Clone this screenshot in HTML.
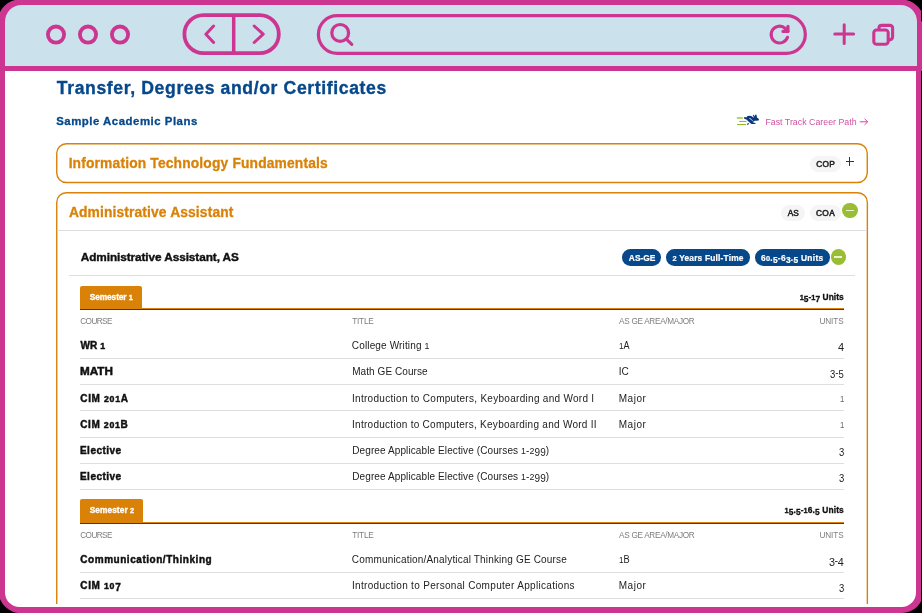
<!DOCTYPE html>
<html><head><meta charset="utf-8"><title>Transfer, Degrees and/or Certificates</title>
<style>
html,body{margin:0;padding:0;}
body{width:922px;height:613px;overflow:hidden;background:#000;position:relative;font-family:"Liberation Sans",sans-serif;}
#bar{position:absolute;left:5px;top:5px;width:911.6px;height:61px;background:#cbe1ec;border-radius:16.5px 16.5px 0 0;}
#page{position:absolute;left:5px;top:71px;width:910.6px;height:536.2px;background:#fff;border-radius:0 0 14.5px 14.5px;overflow:hidden;}
#inner{position:absolute;left:-5px;top:-71px;width:922px;height:604.3px;overflow:hidden;will-change:transform;}
#inner div{position:absolute;box-sizing:border-box;}
#inner span{position:absolute;white-space:pre;line-height:1;transform-origin:0 50%;}
#inner i{font-style:normal;} #inner i.s{font-size:0.88em;} #inner i.d{position:relative;top:0.19em;}
.ov{position:absolute;left:0;top:0;}
</style></head>
<body>
<svg class="ov" width="922" height="613" viewBox="0 0 922 613"><path fill="#cc3691" d="M19.5 -0.4 H901.6 A22.5 22.5 0 0 1 924.1 22.1 L923.4 591.5 A21.5 21.5 0 0 1 901.9 613 L20.9 613.2 A22.5 22.5 0 0 1 -1.6 590.7 L-2 21.1 A21.5 21.5 0 0 1 19.5 -0.4 Z"/><rect x="921" y="12" width="1" height="9.3" fill="#000"/><rect x="921" y="71" width="1" height="542" fill="#000"/></svg>
<div id="bar"></div>
<div id="page"><div id="inner">
<svg class="ov" width="922" height="605" viewBox="0 0 922 605" fill="none" stroke="#d98207" stroke-width="1.4">
<rect x="56.75" y="143.75" width="810.5" height="38.7" rx="9.6"/>
<rect x="56.75" y="192.8" width="810.6" height="460" rx="9.6"/>
</svg>
<div style="left:810px;top:155.8px;width:31.2px;height:16.6px;background:#f5f5f5;border-radius:9px;"></div>
<div style="left:780.7px;top:204.5px;width:24.1px;height:16.9px;background:#f5f5f5;border-radius:9px;"></div>
<div style="left:810px;top:204.5px;width:31px;height:16.9px;background:#f5f5f5;border-radius:9px;"></div>
<div style="left:846px;top:160.85px;width:8.2px;height:1.15px;background:#333;"></div>
<div style="left:849.35px;top:157.2px;width:1.15px;height:8.6px;background:#333;"></div>
<div style="left:842.4px;top:203.0px;width:15.2px;height:15.2px;background:#99be35;border-radius:50%;"></div>
<div style="left:846.0px;top:209.6px;width:8.1px;height:1.8px;background:#ebf2d3;"></div>
<div style="left:830.8px;top:249.4px;width:15.2px;height:15.2px;background:#99be35;border-radius:50%;"></div>
<div style="left:834.2px;top:256.15px;width:8.1px;height:1.8px;background:#ebf2d3;"></div>
<div style="left:57.3px;top:230px;width:809.5px;height:1px;background:#dedede;"></div>
<div style="left:69px;top:275px;width:786px;height:1px;background:#dedede;"></div>
<div style="left:621.5px;top:249.3px;width:39.9px;height:17px;background:#06488a;border-radius:9px;"></div>
<div style="left:665.9px;top:249.3px;width:84.2px;height:17px;background:#06488a;border-radius:9px;"></div>
<div style="left:754.6px;top:249.3px;width:75.1px;height:17px;background:#06488a;border-radius:9px;"></div>
<div style="left:80.4px;top:286px;width:61.5px;height:23px;background:#d98207;border-radius:2px 2px 0 0;"></div>
<div style="left:80.4px;top:308px;width:763.4px;height:1px;background:#d98207;"></div>
<div style="left:80.4px;top:309px;width:763.4px;height:1px;background:#06488a;"></div>
<div style="left:80.4px;top:357.6px;width:763.4px;height:1px;background:#dedede;"></div>
<div style="left:80.4px;top:384.0px;width:763.4px;height:1px;background:#dedede;"></div>
<div style="left:80.4px;top:410.0px;width:763.4px;height:1px;background:#dedede;"></div>
<div style="left:80.4px;top:436.6px;width:763.4px;height:1px;background:#dedede;"></div>
<div style="left:80.4px;top:462.6px;width:763.4px;height:1px;background:#dedede;"></div>
<div style="left:80.4px;top:488.9px;width:763.4px;height:1px;background:#dedede;"></div>
<div style="left:80.4px;top:499.1px;width:62.9px;height:24px;background:#d98207;border-radius:2px 2px 0 0;"></div>
<div style="left:80.4px;top:522px;width:763.4px;height:1px;background:#d98207;"></div>
<div style="left:80.4px;top:523px;width:763.4px;height:1px;background:#06488a;"></div>
<div style="left:80.4px;top:572.0px;width:763.4px;height:1px;background:#dedede;"></div>
<div style="left:80.4px;top:598.0px;width:763.4px;height:1px;background:#dedede;"></div>
<svg class="ov" style="left:732px;top:110px" width="36" height="20" viewBox="732 110 36 20">
<rect x="736.9" y="117" width="6" height="1.9" fill="#b4d466"/>
<rect x="739.2" y="120.9" width="7.3" height="1.1" fill="#96bb33"/>
<rect x="737" y="124" width="9.1" height="1.1" fill="#96bb33"/>
<path fill="#0a3880" d="M743.9 117.4 L745 116.9 L746.3 117.4 L747.2 116.2 L749 115.8 L751.2 116 L752.8 117 L753.9 117.9 L753.4 116.4 L752.8 115 L753.7 114.8 L754.9 116.5 L755.2 114.7 L756.3 114.6 L756.9 116.5 L756.8 117.5 L758.2 118.3 L759 119.5 L758.6 120.4 L756 120.7 L754.6 120.7 L753.4 121.6 L753.2 122.4 L755.4 123 L755.7 123.8 L754.5 124.1 L751.6 124 L750.4 123.3 L748 120.9 L746.4 119.4 L744.3 118.8 Z"/>
<path fill="#0a3880" d="M747 124.7 L747.3 123.6 L748.6 123 L748.9 123.7 L748.2 124.7 Z"/>
<path d="M749.3 118.5 L750.6 118.7 L751.5 120 L752.8 120.9" stroke="#fff" stroke-width="0.75" fill="none"/>
</svg>
<svg class="ov" style="left:858px;top:116px" width="12" height="12" viewBox="858 116 12 12" fill="none" stroke="#c8388f" stroke-width="0.9">
<path d="M859.8 121.8 H867.6 M864.6 118.8 L867.7 121.8 L864.6 124.8"/>
</svg>
<span style="top:79.50px;font-size:17.6px;color:#06488a;font-weight:700;-webkit-text-stroke:0.35px #06488a;left:56.80px;letter-spacing:0.624px;">Transfer, Degrees and/or Certificates</span>
<span style="top:115.60px;font-size:11.4px;color:#06488a;font-weight:700;-webkit-text-stroke:0.3px #06488a;left:56.22px;letter-spacing:0.520px;">Sample Academic Plans</span>
<span style="top:117.90px;font-size:8.8px;color:#d0509f;left:765.41px;letter-spacing:0.012px;">Fast Track Career Path</span>
<span style="top:156.90px;font-size:13.8px;color:#d98207;font-weight:700;-webkit-text-stroke:0.3px #d98207;left:68.64px;letter-spacing:0.166px;">Information Technology Fundamentals</span>
<span style="top:160.15px;font-size:8.3px;color:#222;-webkit-text-stroke:0.5px #222;left:816.31px;letter-spacing:0.277px;">COP</span>
<span style="top:205.90px;font-size:13.8px;color:#d98207;font-weight:700;-webkit-text-stroke:0.3px #d98207;left:68.88px;letter-spacing:0.140px;">Administrative Assistant</span>
<span style="top:209.15px;font-size:8.3px;color:#222;-webkit-text-stroke:0.5px #222;left:787.70px;letter-spacing:-0.030px;">AS</span>
<span style="top:209.15px;font-size:8.3px;color:#222;-webkit-text-stroke:0.5px #222;left:815.91px;letter-spacing:0.432px;">COA</span>
<span style="top:252.40px;font-size:11.8px;color:#111;font-weight:700;-webkit-text-stroke:0.4px #111;left:80.72px;letter-spacing:-0.082px;">Administrative Assistant, AS</span>
<span style="top:254.10px;font-size:8.4px;color:#fff;font-weight:700;-webkit-text-stroke:0.2px #fff;left:628.87px;letter-spacing:0.005px;">AS-GE</span>
<span style="top:254.10px;font-size:8.4px;color:#fff;font-weight:700;-webkit-text-stroke:0.2px #fff;left:672.47px;letter-spacing:0.187px;"><i class="s">2</i> Years Full-Time</span>
<span style="top:254.10px;font-size:8.4px;color:#fff;font-weight:700;-webkit-text-stroke:0.2px #fff;left:760.94px;letter-spacing:0.288px;">6<i class="s">0</i>.<i class="d">5</i>-6<i class="d">3</i>.<i class="d">5</i> Units</span>
<span style="top:293.10px;font-size:8.4px;color:#fff;font-weight:700;-webkit-text-stroke:0.3px #fff;left:89.67px;letter-spacing:-0.105px;">Semester <i class="s">1</i></span>
<span style="top:293.10px;font-size:8.4px;color:#111;font-weight:700;-webkit-text-stroke:0.3px #111;left:799.64px;letter-spacing:0.048px;"><i class="s">1</i><i class="d">5</i>-<i class="s">1</i><i class="d">7</i> Units</span>
<span style="top:317.70px;font-size:8.2px;color:#7d7d7d;left:80.22px;letter-spacing:-0.561px;">COURSE</span>
<span style="top:317.70px;font-size:8.2px;color:#7d7d7d;left:352.17px;letter-spacing:-0.156px;">TITLE</span>
<span style="top:317.70px;font-size:8.2px;color:#7d7d7d;left:619.10px;letter-spacing:-0.293px;">AS GE AREA/MAJOR</span>
<span style="top:317.70px;font-size:8.2px;color:#7d7d7d;left:819.39px;letter-spacing:-0.051px;">UNITS</span>
<span style="top:340.80px;font-size:10.0px;color:#111;font-weight:700;-webkit-text-stroke:0.45px #111;left:80.60px;letter-spacing:0.087px;">WR <i class="s">1</i></span>
<span style="top:340.80px;font-size:10.0px;color:#222;left:351.83px;letter-spacing:0.145px;">College Writing <i class="s">1</i></span>
<span style="top:340.80px;font-size:10.0px;color:#222;left:619.00px;transform:scaleX(0.9028);"><i class="s">1</i>A</span>
<span style="top:339.90px;font-size:10.8px;color:#222;left:837.63px;transform:scaleX(1.0219);"><i class="d">4</i></span>
<span style="top:366.80px;font-size:10.0px;color:#111;font-weight:700;-webkit-text-stroke:0.45px #111;left:79.87px;transform:scaleX(1.1692);">MATH</span>
<span style="top:366.80px;font-size:10.0px;color:#222;left:352.22px;letter-spacing:0.069px;">Math GE Course</span>
<span style="top:366.80px;font-size:10.0px;color:#222;left:618.72px;letter-spacing:0.028px;">IC</span>
<span style="top:366.90px;font-size:10.8px;color:#222;left:830.10px;transform:scaleX(0.8812);"><i class="d">3</i>-<i class="d">5</i></span>
<span style="top:393.80px;font-size:10.0px;color:#111;font-weight:700;-webkit-text-stroke:0.45px #111;left:80.29px;letter-spacing:0.663px;">CIM <i class="s">2</i><i class="s">0</i><i class="s">1</i>A</span>
<span style="top:393.80px;font-size:10.0px;color:#222;left:352.02px;letter-spacing:0.288px;">Introduction to Computers, Keyboarding and Word I</span>
<span style="top:393.80px;font-size:10.0px;color:#222;left:618.72px;letter-spacing:0.529px;">Major</span>
<span style="top:392.90px;font-size:10.8px;color:#666;left:839.52px;transform:scaleX(0.8106);"><i class="s">1</i></span>
<span style="top:419.80px;font-size:10.0px;color:#111;font-weight:700;-webkit-text-stroke:0.45px #111;left:80.29px;letter-spacing:0.614px;">CIM <i class="s">2</i><i class="s">0</i><i class="s">1</i>B</span>
<span style="top:419.80px;font-size:10.0px;color:#222;left:352.02px;letter-spacing:0.276px;">Introduction to Computers, Keyboarding and Word II</span>
<span style="top:419.80px;font-size:10.0px;color:#222;left:618.72px;letter-spacing:0.529px;">Major</span>
<span style="top:418.90px;font-size:10.8px;color:#666;left:839.52px;transform:scaleX(0.8106);"><i class="s">1</i></span>
<span style="top:445.80px;font-size:10.0px;color:#111;font-weight:700;-webkit-text-stroke:0.45px #111;left:79.97px;letter-spacing:0.480px;">Elective</span>
<span style="top:445.80px;font-size:10.0px;color:#222;left:352.22px;letter-spacing:0.104px;">Degree Applicable Elective (Courses <i class="s">1</i>-<i class="s">2</i><i class="d">9</i><i class="d">9</i>)</span>
<span style="top:444.90px;font-size:10.8px;color:#222;left:838.60px;transform:scaleX(0.8778);"><i class="d">3</i></span>
<span style="top:471.80px;font-size:10.0px;color:#111;font-weight:700;-webkit-text-stroke:0.45px #111;left:79.97px;letter-spacing:0.480px;">Elective</span>
<span style="top:471.80px;font-size:10.0px;color:#222;left:352.22px;letter-spacing:0.104px;">Degree Applicable Elective (Courses <i class="s">1</i>-<i class="s">2</i><i class="d">9</i><i class="d">9</i>)</span>
<span style="top:470.90px;font-size:10.8px;color:#222;left:838.60px;transform:scaleX(0.8778);"><i class="d">3</i></span>
<span style="top:506.10px;font-size:8.4px;color:#fff;font-weight:700;-webkit-text-stroke:0.3px #fff;left:89.67px;letter-spacing:0.040px;">Semester <i class="s">2</i></span>
<span style="top:506.10px;font-size:8.4px;color:#111;font-weight:700;-webkit-text-stroke:0.3px #111;left:784.44px;letter-spacing:0.120px;"><i class="s">1</i><i class="d">5</i>.<i class="d">5</i>-<i class="s">1</i>6.<i class="d">5</i> Units</span>
<span style="top:531.70px;font-size:8.2px;color:#7d7d7d;left:80.22px;letter-spacing:-0.561px;">COURSE</span>
<span style="top:531.70px;font-size:8.2px;color:#7d7d7d;left:352.17px;letter-spacing:-0.156px;">TITLE</span>
<span style="top:531.70px;font-size:8.2px;color:#7d7d7d;left:619.10px;letter-spacing:-0.293px;">AS GE AREA/MAJOR</span>
<span style="top:531.70px;font-size:8.2px;color:#7d7d7d;left:819.39px;letter-spacing:-0.051px;">UNITS</span>
<span style="top:554.80px;font-size:10.0px;color:#111;font-weight:700;-webkit-text-stroke:0.45px #111;left:80.29px;letter-spacing:0.541px;">Communication/Thinking</span>
<span style="top:554.80px;font-size:10.0px;color:#222;left:351.83px;letter-spacing:0.173px;">Communication/Analytical Thinking GE Course</span>
<span style="top:554.80px;font-size:10.0px;color:#222;left:618.99px;transform:scaleX(0.9238);"><i class="s">1</i>B</span>
<span style="top:554.90px;font-size:10.8px;color:#222;left:829.06px;letter-spacing:-0.467px;"><i class="d">3</i>-<i class="d">4</i></span>
<span style="top:580.80px;font-size:10.0px;color:#111;font-weight:700;-webkit-text-stroke:0.45px #111;left:80.29px;letter-spacing:0.656px;">CIM <i class="s">1</i><i class="s">0</i><i class="d">7</i></span>
<span style="top:580.80px;font-size:10.0px;color:#222;left:352.02px;letter-spacing:0.312px;">Introduction to Personal Computer Applications</span>
<span style="top:580.80px;font-size:10.0px;color:#222;left:618.72px;letter-spacing:0.529px;">Major</span>
<span style="top:580.90px;font-size:10.8px;color:#222;left:838.60px;transform:scaleX(0.8778);"><i class="d">3</i></span>
</div></div>
<svg class="ov" width="922" height="613" viewBox="0 0 922 613" fill="none" stroke="#cc3691" stroke-linecap="round" stroke-linejoin="round">
<g stroke-width="3.8">
<circle cx="56" cy="34.6" r="8.1"/><circle cx="88" cy="34.6" r="8.1"/><circle cx="120" cy="34.6" r="8.1"/>
<rect x="184.4" y="15.1" width="94.4" height="38.1" rx="19.05"/>
</g>
<path d="M233.7 15.5V53" stroke-width="3.5" stroke-linecap="butt"/>
<path d="M213.6 26 L205.9 34.2 L213.6 42.5 M254.2 26 L263.2 34.2 L254.2 42.5" stroke-width="3"/>
<rect x="318.4" y="15.65" width="486.9" height="37.7" rx="18.85" stroke-width="3.2"/>
<circle cx="340.2" cy="32.9" r="8.4" stroke-width="3.2"/>
<path d="M346.6 39.4 L351.8 44.4" stroke-width="3.2"/>
<path d="M787.5 37.3 A8.4 8.4 0 1 1 785.3 28.4 L787.9 31.2" stroke-width="3.1"/>
<path d="M788 26.2 V31.4 H783" stroke-width="3.1"/>
<path d="M787.6 26.4 L787.6 31 L783.4 31 Z" fill="#cc3691" stroke-width="1"/>
<path d="M834.8 34 H853.6 M844.2 24.8 V43.4" stroke-width="3"/>
<g stroke-width="3.1">
<path d="M879 28 V27.9 A2.6 2.6 0 0 1 881.6 25.4 H890 A2.6 2.6 0 0 1 892.6 28 V37 A2.6 2.6 0 0 1 890 39.6 H889.6"/>
<rect x="873.8" y="30" width="14.4" height="14.2" rx="2.8"/>
</g>
</svg>
</body></html>
